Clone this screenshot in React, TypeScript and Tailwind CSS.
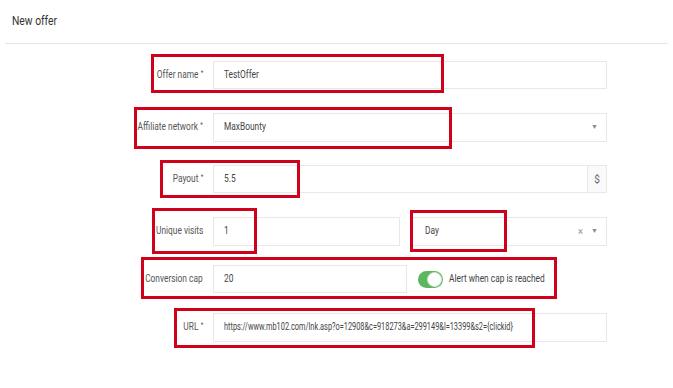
import React from "react";

const FONT = { fontFamily: '"Roboto", "Liberation Sans", sans-serif' };

// the screenshot's type is narrow, so squeeze the text horizontally
function T({ children, right, tight }: { children: React.ReactNode; right?: boolean; tight?: boolean }) {
  return (
    <span
      className={`inline-block whitespace-nowrap ${tight ? "scale-x-[0.67]" : "scale-x-[0.76]"} ${right ? "origin-right" : "origin-left"}`}
    >
      {children}
    </span>
  );
}

function Label({ text, required }: { text: string; required?: boolean }) {
  return (
    <div className="w-[213px] shrink-0 pr-[10px] text-right text-[11px] text-[#555]">
      <T right>
        {text}
        {required && <span className="ml-[3px] align-top text-[8px]">*</span>}
      </T>
    </div>
  );
}

function Field({ value, tight, className = "" }: { value?: string; tight?: boolean; className?: string }) {
  return (
    <div className={`flex h-full items-center overflow-hidden border border-[#e8e8e8] bg-white pl-[10px] text-[11px] text-[#444] ${className}`}>
      <T tight={tight}>{value}</T>
    </div>
  );
}

function Caret() {
  return <span className="text-[7px] text-[#888]">▼</span>;
}

// annotation boxes drawn over the form
const MARKS = [
  { left: 151, top: 54, w: 293, h: 39 },
  { left: 134, top: 107, w: 318, h: 42 },
  { left: 160, top: 160, w: 140, h: 38 },
  { left: 152, top: 208, w: 105, h: 46 },
  { left: 410, top: 210, w: 97, h: 42 },
  { left: 141, top: 257, w: 416, h: 42 },
  { left: 174, top: 308, w: 361, h: 40 },
];

export default function App() {
  return (
    <div className="relative h-[388px] w-[673px] overflow-hidden bg-white" style={FONT}>
      {/* Header */}
      <div className="h-[43px] pl-[12px] pt-[12px] text-[12px] text-[#333]">
        <span className="inline-block origin-left scale-x-[0.86]">New offer</span>
      </div>
      <div className="mx-[5px] border-t border-[#e6e6e6]" />

      {/* Form */}
      <div className="flex flex-col pt-[17px]">
        <div className="flex h-[28px] items-center">
          <Label text="Offer name" required />
          <Field value="TestOffer" className="w-[394px]" />
        </div>

        <div className="mt-[24px] flex h-[29px] items-center">
          <Label text="Affiliate network" required />
          <div className="flex h-full w-[394px] items-center justify-between border border-[#e8e8e8] pl-[10px] pr-[8px] text-[11px] text-[#444]">
            <T>MaxBounty</T>
            <Caret />
          </div>
        </div>

        <div className="mt-[23px] flex h-[28px] items-center">
          <Label text="Payout" required />
          <div className="flex h-full w-[394px] border border-[#e8e8e8] text-[11px] text-[#444]">
            <div className="flex flex-1 items-center pl-[10px]">
              <T>5.5</T>
            </div>
            <div className="flex w-[19px] items-center justify-center border-l border-[#e8e8e8] bg-[#fafafa] text-[10px] text-[#666]">$</div>
          </div>
        </div>

        <div className="mt-[24px] flex h-[29px] items-center">
          <Label text="Unique visits" />
          <Field value="1" className="w-[187px]" />
          <div className="ml-[10px] flex h-full w-[197px] items-center justify-between border border-[#e8e8e8] pl-[14px] pr-[8px] text-[11px] text-[#444]">
            <T>Day</T>
            <span className="flex items-center gap-[8px]">
              <span className="text-[10px] text-[#999]">×</span>
              <Caret />
            </span>
          </div>
        </div>

        <div className="mt-[19px] flex h-[28px] items-center">
          <Label text="Conversion cap" />
          <Field value="20" className="w-[194px]" />
          <div className="ml-[11px] flex items-center">
            <div className="flex h-[17px] w-[25px] items-center justify-end rounded-full bg-[#5cb85c] pr-[1px]">
              <div className="h-[15px] w-[15px] rounded-full border border-[#ddd] bg-white" />
            </div>
            <span className="ml-[6px] text-[11px] text-[#444]">
              <T>Alert when cap is reached</T>
            </span>
          </div>
        </div>

        <div className="mt-[20px] flex h-[29px] items-center">
          <Label text="URL" required />
          <Field
            value="https://www.mb102.com/lnk.asp?o=12908&c=918273&a=299149&l=13399&s2={clickid}"
            tight
            className="w-[394px] text-[10px]"
          />
        </div>
      </div>

      {/* red annotation boxes */}
      {MARKS.map((m, i) => (
        <div
          key={i}
          className="pointer-events-none absolute border-[3px] border-[#d0021b]"
          style={{ left: m.left, top: m.top, width: m.w, height: m.h }}
        />
      ))}
    </div>
  );
}
